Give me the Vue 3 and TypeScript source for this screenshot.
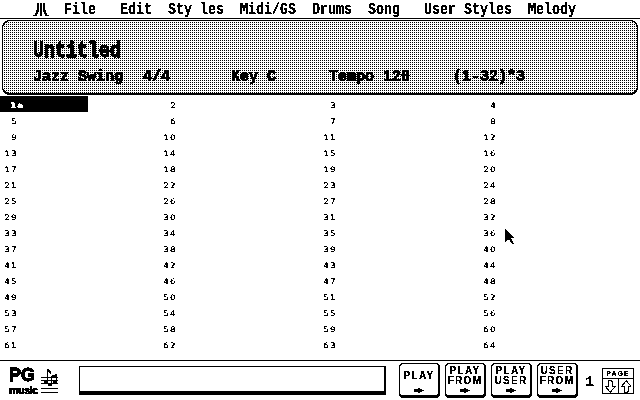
<script setup lang="ts">
const menus: { label: string; gap: number }[] = [
  { label: 'File', gap: 24 },
  { label: 'Edit', gap: 16 },
  { label: 'Sty les', gap: 16 },
  { label: 'Midi/GS', gap: 16 },
  { label: 'Drums', gap: 16 },
  { label: 'Song', gap: 24 },
  { label: 'User Styles', gap: 16 },
  { label: 'Melody', gap: 0 },
]
const bars: number[] = Array.from({ length: 64 }, (_, i) => i + 1)
const buttons: string[][] = [['PLAY'], ['PLAY', 'FROM'], ['PLAY', 'USER'], ['USER', 'FROM']]
</script>

<template>
  <div class="screen">
    <svg class="defs" width="0" height="0" aria-hidden="true">
      <filter id="mono" x="0" y="0" width="100%" height="100%" color-interpolation-filters="sRGB">
        <feComponentTransfer>
          <feFuncR type="discrete" tableValues="0 0 1" />
          <feFuncG type="discrete" tableValues="0 0 1" />
          <feFuncB type="discrete" tableValues="0 0 1" />
        </feComponentTransfer>
      </filter>
    </svg>

    <header class="menubar">
      <svg class="atari" width="16" height="13" viewBox="0 0 16 13">
        <path d="M7 0h2v13h-2z" />
        <path d="M4 0h2v5q0 5-3 8h-3q4-3 4-8z" />
        <path d="M10 0h2v5q0 5 4 8h-3q-3-3-3-8z" />
      </svg>
      <span v-for="m in menus" :key="m.label" class="menu" :style="{ marginRight: m.gap + 'px' }">{{ m.label }}</span>
    </header>

    <section class="panel">
      <h1 class="title">Untitled</h1>
      <div class="info">
        <span>Jazz Swing</span>
        <span>4/4</span>
        <span>Key C</span>
        <span>Tempo 120</span>
        <span>(1-32)*3</span>
      </div>
    </section>

    <main class="grid">
      <div v-for="n in bars" :key="n" class="cell" :class="{ current: n === 1 }">
        <span class="num">{{ n === 1 ? '1a' : n }}</span>
      </div>
    </main>

    <footer class="footer">
      <div class="logo">
        <div class="logo-text">
          <span class="pg">PG</span>
          <span class="music">music</span>
        </div>
        <svg class="staff" width="17" height="26" viewBox="0 0 17 26">
          <path d="M0 9.5h17M0 12.5h17M0 15.5h17M0 20.5h17M0 24.5h17" stroke="#000" fill="none" />
          <path d="M6 1h1v14h-1zM7 1l3 3v2l-3-2zM15 6h1v10h-1zM10 8l6-2v2l-6 2zM10 8h1v9h-1z" />
          <path d="M3 13h4v3h-4zM7 15h4v3h-4zM12 13h4v3h-4z" />
        </svg>
      </div>

      <div class="message"></div>

      <div class="buttons">
        <button v-for="(b, i) in buttons" :key="i" class="btn" :class="{ single: b.length === 1 }" type="button">
          <span v-for="line in b" :key="line" class="btn-line">{{ line }}</span>
          <svg class="btn-arrow" width="10" height="5" viewBox="0 0 10 5">
            <path d="M0 1h4v-1h2v1h2v1h2v1h-2v1h-2v1h-2v-1h-4z" />
          </svg>
        </button>
      </div>

      <span class="counter">1</span>

      <div class="page">
        <div class="page-label">PAGE</div>
        <div class="page-arrows">
          <svg width="15" height="15" viewBox="0 0 15 15">
            <path d="M5.5 1.5h4v6h3l-5 6-5-6h3z" fill="none" stroke="#000" />
          </svg>
          <svg width="15" height="15" viewBox="0 0 15 15">
            <path d="M5.5 13.5h4v-6h3l-5-6-5 6h3z" fill="none" stroke="#000" />
          </svg>
        </div>
      </div>
    </footer>

    <svg class="cursor" width="10" height="16" viewBox="0 0 10 16">
      <path d="M0 0l9 9h-3l3 6h-2l-3-5-4 3z" />
    </svg>
  </div>
</template>

<style>
html, body { margin: 0; background: #fff; overflow: hidden; }
</style>

<style scoped>
.screen {
  position: relative;
  width: 640px;
  height: 400px;
  display: flex;
  flex-direction: column;
  background: #fff;
  color: #000;
  overflow: hidden;
  font-family: "Liberation Mono", monospace;
  filter: url(#mono);
}
.defs { position: absolute; }
.menubar {
  box-sizing: border-box;
  height: 19px;
  display: flex;
  align-items: center;
  padding-left: 33px;
  border-bottom: 1px solid #000;
  font-size: 13.33px;
  font-weight: 700;
  white-space: pre;
}
.atari { margin-right: 15px; }
.menu { display: inline-block; line-height: 16px; transform: translateY(2px) scaleY(1.25); transform-origin: center 60%; }
.panel {
  box-sizing: border-box;
  height: 75px;
  margin: 1px 2px 0 2px;
  padding: 23px 0 0 30px;
  border: 1px solid #000;
  border-bottom-width: 2px;
  border-radius: 8px;
  background:
    linear-gradient(90deg, #fff 50%, transparent 50%) 0 0 / 2px 2px,
    linear-gradient(#fff 50%, #000 50%) 0 0 / 2px 2px;
}
.title {
  margin: 0;
  font-size: 18.33px;
  line-height: 16px;
  font-weight: 700;
  transform: scaleY(1.25);
  transform-origin: left center;
  -webkit-text-stroke: 0.8px #000;
}
.info {
  display: grid;
  grid-template-columns: 110px 88px 98px 124px auto;
  margin-top: 9px;
  font-size: 15px;
  line-height: 17px;
  font-weight: 700;
  white-space: pre;
  transform: scaleY(1.1);
  -webkit-text-stroke: 0.5px #000;
}
.grid {
  display: grid;
  grid-template-columns: 88px 89px 160px 160px 143px;
  grid-auto-rows: 16px;
  margin-top: 1px;
}
.cell {
  text-align: right;
  font-family: "DejaVu Sans", sans-serif;
  font-size: 7.5px;
  letter-spacing: 1px;
  line-height: 20px;
}
.num { display: inline-block; transform: scaleX(1.15); transform-origin: right center; }
.cell:nth-child(4n+1) { padding-right: 70px; grid-column: 1; }
.cell.current {
  background: #000;
  color: #fff;
  padding-right: 64px;
  font-weight: 700;
  -webkit-text-stroke: 0.5px #fff;
}
.footer {
  position: absolute;
  left: 0;
  right: 0;
  bottom: 0;
  height: 40px;
  box-sizing: border-box;
  border-top: 1px solid #000;
  display: flex;
  align-items: flex-start;
}
.logo { display: flex; width: 79px; padding: 7px 0 0 9px; box-sizing: border-box; flex: none; }
.logo-text { display: flex; flex-direction: column; width: 32px; font-family: "Liberation Sans", sans-serif; font-weight: 700; }
.pg { font-size: 18px; line-height: 14px; letter-spacing: 0; -webkit-text-stroke: 0.9px #000; }
.music { font-size: 10.5px; line-height: 12px; letter-spacing: -0.3px; margin-top: 2px; -webkit-text-stroke: 0.4px #000; }
.message {
  box-sizing: border-box;
  width: 307px;
  height: 29px;
  margin-top: 5px;
  border: 1px solid #000;
  border-right-width: 2px;
  border-bottom-width: 4px;
  flex: none;
}
.buttons { display: flex; gap: 5px; margin: 2px 0 0 13px; }
.btn {
  box-sizing: border-box;
  width: 41px;
  height: 35px;
  padding: 2px 0 2px;
  display: flex;
  flex-direction: column;
  align-items: center;
  background: #fff;
  color: #000;
  border: 1px solid #000;
  border-right-width: 2px;
  border-bottom-width: 3px;
  border-radius: 4px;
  font-family: "Liberation Sans", sans-serif;
  font-size: 10px;
  font-weight: 700;
  letter-spacing: 1.3px;
  line-height: 10px;
}
.btn.single { padding-top: 7px; }
.btn-line { display: block; height: 10px; overflow: hidden; }
.btn-arrow { margin-top: auto; }
.counter {
  margin: 15px 0 0 7px;
  font-size: 15px;
  font-weight: 700;
  line-height: 14px;
  width: 17px;
}
.page {
  box-sizing: border-box;
  width: 32px;
  height: 26px;
  margin-top: 7px;
  border: 1px solid #000;
  display: flex;
  flex-direction: column;
}
.page-label {
  height: 9px;
  border-bottom: 1px solid #000;
  text-align: center;
  font-family: "Liberation Sans", sans-serif;
  font-size: 7px;
  font-weight: 700;
  line-height: 9px;
  letter-spacing: 1px;
}
.page-arrows { display: flex; flex: 1; }
.page-arrows svg + svg { border-left: 1px solid #000; }
.cursor { position: absolute; left: 505px; top: 229px; }
</style>
